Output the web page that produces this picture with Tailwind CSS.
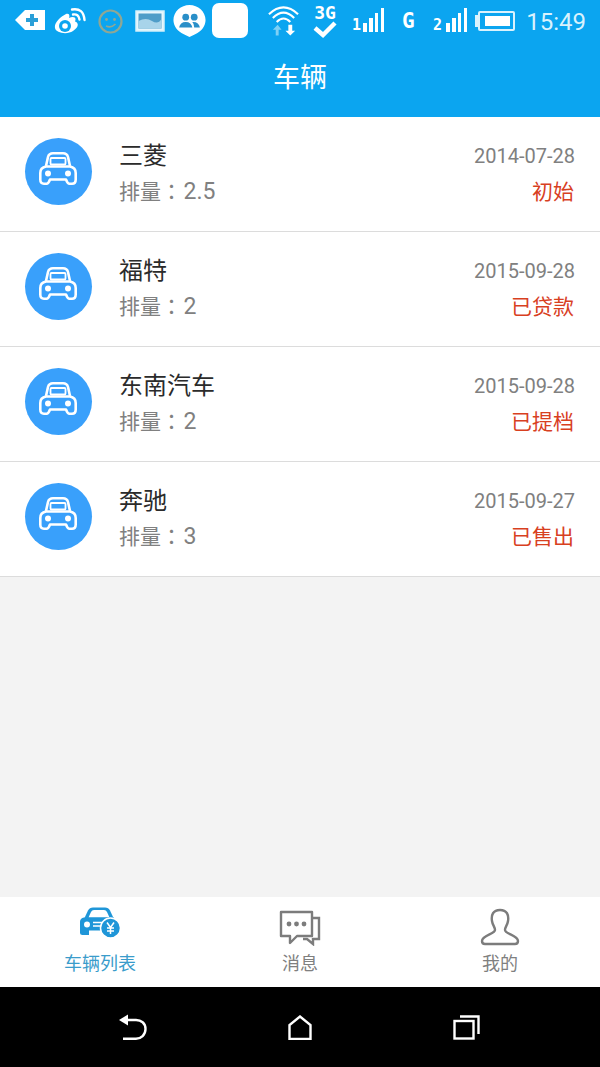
<!DOCTYPE html>
<html lang="zh">
<head>
    <meta charset="UTF-8">
    <meta name="viewport" content="width=device-width, initial-scale=1.0">
    <title>车辆</title>
    <script src="https://cdn.jsdelivr.net/npm/@tailwindcss/browser@4"></script>
</head>
<body class="bg-[#f3f3f3] font-['Roboto','Noto_Sans_CJK_SC',sans-serif]">
    <svg class="hidden">
        <symbol id="car" viewBox="0 0 38 33">
            <path d="M7 14 L9 5 Q10 1.3 14 1.3 H24 Q28 1.3 29 5 L31 14" fill="none" stroke="currentColor" stroke-width="2.6"/>
            <rect x="11.5" y="6" width="15" height="6.5" rx="1" fill="none" stroke="currentColor" stroke-width="1.8"/>
            <path d="M7 14.5 H31 Q36.7 15.5 36.7 21 V27.5 Q36.7 31.7 33 31.7 H30.5 Q28.5 31.7 27 27.5 H11 Q9.5 31.7 7.5 31.7 H5 Q1.3 31.7 1.3 27.5 V21 Q1.3 15.5 7 14.5 Z" fill="none" stroke="currentColor" stroke-width="2.6" stroke-linejoin="round"/>
            <circle cx="9" cy="21.5" r="3" fill="currentColor"/>
            <circle cx="29" cy="21.5" r="3" fill="currentColor"/>
        </symbol>
    </svg>

    <div class="flex flex-col h-[1067px] w-[600px] overflow-hidden">
        <!-- Status bar -->
        <div class="h-[44px] bg-[#0ba5f0] flex items-center pl-[15px] pr-[14px] text-white shrink-0">
            <svg class="w-[30px] h-[22px] mb-[4px] shrink-0" viewBox="0 0 30 22">
                <path d="M0 11 L10 1 H30 V21 H10 Z" fill="#fff"/>
                <path d="M15 5 h4 v4 h4 v4 h-4 v4 h-4 v-4 h-4 v-4 h4 Z" fill="#2a9fd8"/>
            </svg>
            <svg class="w-[32px] h-[27px] ml-[9px] mb-[4px] shrink-0" viewBox="0 0 32 27">
                <path d="M12 7 C6 10 0 16 1 21 C2 26 13 28 19 24 C25 20 25 16 21 14.5 C23 10 19 9 15 11 C16 8 15 6 12 7Z" fill="#fff"/>
                <circle cx="11" cy="19" r="6" fill="#0ba5f0"/>
                <circle cx="11" cy="19" r="2.8" fill="#fff"/>
                <path d="M19 7.5 Q24.5 6.5 25.5 12.5 M18 2.5 Q29.5 0.5 30.5 13" fill="none" stroke="#fff" stroke-width="2.4" stroke-linecap="round"/>
            </svg>
            <svg class="w-[25px] h-[25px] ml-[12px] mb-[1px] shrink-0" viewBox="0 0 25 25">
                <circle cx="12.5" cy="12.5" r="11" fill="none" stroke="#8fa794" stroke-width="2.2"/>
                <circle cx="8.5" cy="10.5" r="1.4" fill="#8fa794"/>
                <circle cx="16.5" cy="10.5" r="1.4" fill="#8fa794"/>
                <path d="M8 17 Q13 19.5 17.5 15" fill="none" stroke="#8fa794" stroke-width="1.6"/>
            </svg>
            <svg class="w-[30px] h-[22px] ml-[12px] mb-[2px] shrink-0" viewBox="0 0 30 22">
                <rect x="1" y="1" width="28" height="20" fill="#e8f6fc" stroke="#d5f0fa" stroke-width="1.5"/>
                <rect x="3.5" y="3.5" width="23" height="15" fill="#4f9dc8"/>
                <path d="M3.5 11 Q11 7 17 11 T26.5 9 V18.5 H3.5 Z" fill="#a8d4ea"/>
            </svg>
            <svg class="w-[33px] h-[34px] ml-[8px] mb-[2px] shrink-0" viewBox="0 0 34 36">
                <path d="M17 35 L11 32 C4 29 0 23 0 17 C0 8 8 1 17 1 C26 1 34 8 34 17 C34 23 30 29 23 32 Z" fill="#fff"/>
                <circle cx="13" cy="14" r="3.6" fill="#2a8fc8"/>
                <circle cx="22" cy="14" r="3.6" fill="#2a8fc8"/>
                <path d="M6 25 Q7 19 13 19 Q19 19 20 25 Z M21 19 Q27 19 28 25 H22 Q22 21 20 19 Z" fill="#2a8fc8"/>
            </svg>
            <div class="w-[36px] h-[35px] ml-[6px] mb-[3px] bg-white rounded-[7px] shrink-0"></div>
            <svg class="w-[33px] h-[34px] ml-[19px] mb-[4px] shrink-0" viewBox="0 0 34 34">
                <path d="M2 11 Q17 -3 32 11 M6 15 Q17 4 28 15 M10 19 Q17 12 24 19" fill="none" stroke="#fff" stroke-width="2.2"/>
                <path d="M9 33 V27 H6 L11 22 L15 27 H12 V33 Z" fill="#7fd0f5"/>
                <path d="M22 22 H26 V28 H29 L24 33 L19 28 H22 Z" fill="#fff"/>
            </svg>
            <div class="ml-[13px] w-[24px] mb-[1px] flex flex-col items-center shrink-0">
                <span class="font-['DejaVu_Sans_Mono',monospace] text-[18px] leading-[15px] font-bold">3G</span>
                <svg class="w-[24px] h-[18px]" viewBox="0 0 24 18"><path d="M2 8 L10 15 L22 3" fill="none" stroke="#fff" stroke-width="4.4"/></svg>
            </div>
            <div class="ml-[15px] w-[32px] flex items-end justify-between h-[24px] mb-[4px] shrink-0">
                <span class="font-['DejaVu_Sans_Mono',monospace] text-[15px] leading-[13px] font-bold w-[9px]">1</span>
                <i class="w-[3.5px] h-[9px] bg-white"></i><i class="w-[3.5px] h-[14px] bg-white"></i><i class="w-[3.5px] h-[19px] bg-white"></i><i class="w-[3.5px] h-[24px] bg-white"></i>
            </div>
            <span class="ml-[18px] w-[13px] font-['DejaVu_Sans_Mono',monospace] text-[21px] font-bold leading-none mb-[1px] shrink-0">G</span>
            <div class="ml-[18px] w-[34px] flex items-end justify-between h-[24px] mb-[4px] shrink-0">
                <span class="font-['DejaVu_Sans_Mono',monospace] text-[15px] leading-[13px] font-bold w-[11px]">2</span>
                <i class="w-[3.5px] h-[9px] bg-white"></i><i class="w-[3.5px] h-[14px] bg-white"></i><i class="w-[3.5px] h-[19px] bg-white"></i><i class="w-[3.5px] h-[24px] bg-white"></i>
            </div>
            <div class="ml-[8px] flex items-center mb-[2px] shrink-0">
                <div class="w-[3px] h-[12px] bg-white/85"></div>
                <div class="w-[37px] h-[20px] border-2 border-white/85 rounded-[2px] pl-[5px] pr-[3px] py-[3px]">
                    <div class="w-full h-full bg-white"></div>
                </div>
            </div>
            <span class="ml-auto text-[24px] leading-none text-[#d9f2fd] mb-[1px]">15:49</span>
        </div>

        <!-- Title bar -->
        <div class="h-[73px] bg-[#0ba5f0] flex items-center justify-center text-white text-[27px] shrink-0 pb-[5px]">车辆</div>

        <!-- Vehicle list -->
        <div class="flex-1 bg-[#f3f3f3]">
            <div class="h-[115px] bg-white border-b border-[#dcdcdc] flex items-center pl-[25px] pr-[25px]">
                <div class="w-[67px] h-[67px] rounded-full bg-[#39a0fb] flex items-center justify-center text-white shrink-0 mb-[5px]">
                    <svg class="w-[38px] h-[33px] mb-[6px] mr-[2px]"><use href="#car"/></svg>
                </div>
                <div class="ml-[27px] flex-1">
                    <div class="text-[24px] leading-[32px] text-[#2b2b2b]">三菱</div>
                    <div class="text-[21px] leading-[32px] mt-[2px] text-[#808080]">排量<span lang="zh-TW" class="font-['Noto_Sans_CJK_TC']">：</span><span class="text-[23px] ml-[1.5px]">2.5</span></div>
                </div>
                <div class="text-right">
                    <div class="text-[20px] leading-[32px] text-[#808080]">2014-07-28</div>
                    <div class="text-[21px] leading-[32px] mt-[4px] mr-[1px] text-[#d8401f]">初始</div>
                </div>
            </div>
            <div class="h-[115px] bg-white border-b border-[#dcdcdc] flex items-center pl-[25px] pr-[25px]">
                <div class="w-[67px] h-[67px] rounded-full bg-[#39a0fb] flex items-center justify-center text-white shrink-0 mb-[5px]">
                    <svg class="w-[38px] h-[33px] mb-[6px] mr-[2px]"><use href="#car"/></svg>
                </div>
                <div class="ml-[27px] flex-1">
                    <div class="text-[24px] leading-[32px] text-[#2b2b2b]">福特</div>
                    <div class="text-[21px] leading-[32px] mt-[2px] text-[#808080]">排量<span lang="zh-TW" class="font-['Noto_Sans_CJK_TC']">：</span><span class="text-[23px] ml-[1.5px]">2</span></div>
                </div>
                <div class="text-right">
                    <div class="text-[20px] leading-[32px] text-[#808080]">2015-09-28</div>
                    <div class="text-[21px] leading-[32px] mt-[4px] mr-[1px] text-[#d8401f]">已贷款</div>
                </div>
            </div>
            <div class="h-[115px] bg-white border-b border-[#dcdcdc] flex items-center pl-[25px] pr-[25px]">
                <div class="w-[67px] h-[67px] rounded-full bg-[#39a0fb] flex items-center justify-center text-white shrink-0 mb-[5px]">
                    <svg class="w-[38px] h-[33px] mb-[6px] mr-[2px]"><use href="#car"/></svg>
                </div>
                <div class="ml-[27px] flex-1">
                    <div class="text-[24px] leading-[32px] text-[#2b2b2b]">东南汽车</div>
                    <div class="text-[21px] leading-[32px] mt-[2px] text-[#808080]">排量<span lang="zh-TW" class="font-['Noto_Sans_CJK_TC']">：</span><span class="text-[23px] ml-[1.5px]">2</span></div>
                </div>
                <div class="text-right">
                    <div class="text-[20px] leading-[32px] text-[#808080]">2015-09-28</div>
                    <div class="text-[21px] leading-[32px] mt-[4px] mr-[1px] text-[#d8401f]">已提档</div>
                </div>
            </div>
            <div class="h-[115px] bg-white border-b border-[#dcdcdc] flex items-center pl-[25px] pr-[25px]">
                <div class="w-[67px] h-[67px] rounded-full bg-[#39a0fb] flex items-center justify-center text-white shrink-0 mb-[5px]">
                    <svg class="w-[38px] h-[33px] mb-[6px] mr-[2px]"><use href="#car"/></svg>
                </div>
                <div class="ml-[27px] flex-1">
                    <div class="text-[24px] leading-[32px] text-[#2b2b2b]">奔驰</div>
                    <div class="text-[21px] leading-[32px] mt-[2px] text-[#808080]">排量<span lang="zh-TW" class="font-['Noto_Sans_CJK_TC']">：</span><span class="text-[23px] ml-[1.5px]">3</span></div>
                </div>
                <div class="text-right">
                    <div class="text-[20px] leading-[32px] text-[#808080]">2015-09-27</div>
                    <div class="text-[21px] leading-[32px] mt-[4px] mr-[1px] text-[#d8401f]">已售出</div>
                </div>
            </div>
        </div>

        <!-- Tab bar -->
        <div class="h-[90px] bg-white grid grid-cols-3 shrink-0">
            <div class="flex flex-col items-center pt-[10px]">
                <svg class="w-[42px] h-[32px]" viewBox="0 0 42 32">
                    <path d="M5 12 L9 3.5 Q10.5 0.5 14 0.5 H26 Q29.5 0.5 31 3.5 L35 12 Z" fill="#1f96d8"/>
                    <path d="M9.5 10.5 L12 5 Q13 3 15 3 H25 Q27 3 28 5 L30.5 10.5 Z" fill="#fff"/>
                    <path d="M1 15 Q1 11 5 10.5 H35 V26 H28 V23.5 H10 V28 H3.5 Q1 28 1 26 Z" fill="#1f96d8"/>
                    <circle cx="8" cy="17.5" r="3" fill="#fff"/>
                    <path d="M14 15.5 H25 M14 19 H24" stroke="#fff" stroke-width="1.6"/>
                    <circle cx="31.5" cy="21" r="10" fill="#1f96d8" stroke="#fff" stroke-width="1.5"/>
                    <path d="M28 15.5 L31.5 20.5 L35 15.5 M31.5 20.5 V27 M28 21 H35 M28 24 H35" fill="none" stroke="#fff" stroke-width="1.5"/>
                </svg>
                <span class="text-[18px] leading-[24px] mt-[13px] text-[#3a9ccb]">车辆列表</span>
            </div>
            <div class="flex flex-col items-center pt-[13px]">
                <svg class="w-[42px] h-[36px]" viewBox="0 0 42 36" fill="none" stroke="#7c7c7c" stroke-width="2.4">
                    <path d="M2 2 H33 V26 H18 L11 33 V26 H2 Z" stroke-linejoin="round"/>
                    <path d="M33 8 H40 V29 H34 V34 L28 29 H24"/>
                    <circle cx="10" cy="14" r="2.4" fill="#7c7c7c" stroke="none"/>
                    <circle cx="17.5" cy="14" r="2.4" fill="#7c7c7c" stroke="none"/>
                    <circle cx="25" cy="14" r="2.4" fill="#7c7c7c" stroke="none"/>
                </svg>
                <span class="text-[18px] leading-[24px] mt-[6px] text-[#808080]">消息</span>
            </div>
            <div class="flex flex-col items-center pt-[11px]">
                <svg class="w-[40px] h-[38px]" viewBox="0 0 40 38" fill="none" stroke="#7c7c7c" stroke-width="2.4">
                    <path d="M20 2 C13 2 11 7 12 13 C12.5 17 15 19 15 22 C15 26 2 27 2 33 Q2 36 5 36 H35 Q38 36 38 33 C38 27 25 26 25 22 C25 19 27.5 17 28 13 C29 7 27 2 20 2 Z" stroke-linejoin="round"/>
                </svg>
                <span class="text-[18px] leading-[24px] mt-[6px] text-[#808080]">我的</span>
            </div>
        </div>

        <!-- Navigation bar -->
        <div class="h-[80px] bg-black grid grid-cols-3 shrink-0 px-[50px]">
            <div class="flex items-center justify-center">
                <svg class="w-[28px] h-[26px]" viewBox="0 0 28 26" fill="none" stroke="#fff" stroke-width="2.4">
                    <path d="M3 6 H17 C22 6 26.5 9 26.5 15 C26.5 21 22 24.8 17 24.8 H4"/>
                    <path d="M0 6 L9 0.5 V11.5 Z" fill="#fff" stroke="none"/>
                </svg>
            </div>
            <div class="flex items-center justify-center">
                <svg class="w-[24px] h-[25px]" viewBox="0 0 24 25" fill="none" stroke="#fff" stroke-width="2.4">
                    <path d="M1.5 24 V10 L12 1.5 L22.5 10 V24 Z"/>
                </svg>
            </div>
            <div class="flex items-center justify-center">
                <svg class="w-[27px] h-[25px]" viewBox="0 0 27 25" fill="none" stroke="#fff" stroke-width="2.4">
                    <rect x="1.5" y="6" width="19" height="17.5"/>
                    <path d="M7 1.5 H25.5 V19"/>
                </svg>
            </div>
        </div>
    </div>
</body>
</html>
